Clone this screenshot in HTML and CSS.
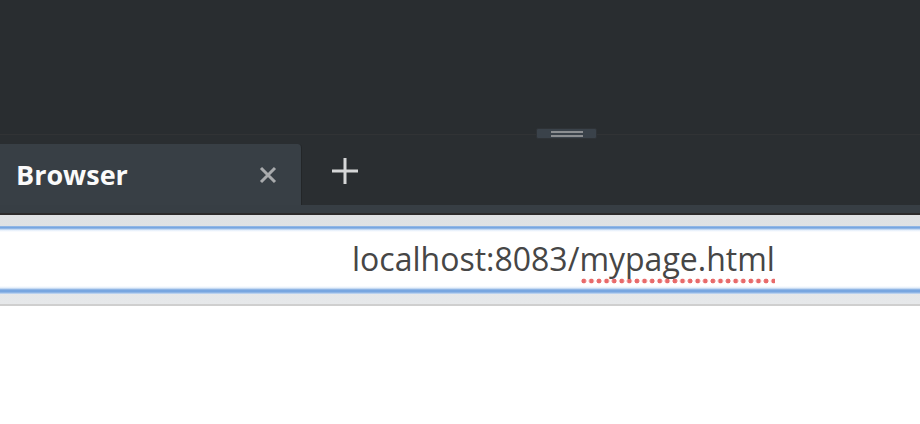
FILE: index.html
```html
<!DOCTYPE html>
<html>
<head>
<meta charset="utf-8">
<link rel="stylesheet" href="styles.css">
</head>
<body>
<div class="top"></div>
<div class="divider">
  <div class="handle"><span class="grip"></span><span class="grip"></span></div>
</div>
<div class="tabbar">
  <div class="tabs">
    <div class="tab">
      <span class="tab-title">Browser</span>
      <svg class="tab-close" width="18" height="18" viewBox="0 0 18 18"><path d="M2 2L16 16M16 2L2 16" stroke="#a9abad" stroke-width="3" fill="none"/></svg>
    </div>
    <div class="newtab">
      <svg width="28" height="28" viewBox="0 0 28 28"><path d="M14 1V27M1 14H27" stroke="#d6d7d8" stroke-width="3" fill="none"/></svg>
    </div>
  </div>
  <div class="tabstrip"></div>
</div>
<div class="urlwrap">
  <div class="url"><span class="url-host">localhost:8083/</span><span class="misspelled">mypage.html</span></div>
</div>
</body>
</html>
```
FILE: styles.css
```css
html, body { margin: 0; padding: 0; background: #fff; }
body { width: 920px; height: 424px; overflow: hidden; font-family: "Open Sans", "Noto Sans", sans-serif; }
.top { height: 134px; background: #292d30; }
.divider { height: 1px; background: #313335; position: relative; }
.handle {
  position: absolute; left: 536px; top: -6px; width: 59px; height: 9px;
  background: #3a424a; border: 1px solid #2e3236; border-radius: 2px;
  display: flex; flex-direction: column; align-items: center; justify-content: center; gap: 2px;
}
.grip { display: block; width: 32px; height: 2px; background: #8b8e91; }
.tabbar { background: #2a2e31; padding-top: 9px; }
.tabs { display: flex; height: 61px; }
.tab {
  width: 285px; padding-left: 16px; background: #383f45;
  border-right: 1px solid #232628; border-top-right-radius: 4px;
  display: flex; align-items: center; justify-content: space-between;
}
.tab-title { color: #fafafa; font-weight: 700; font-size: 27px; line-height: 1; margin-top: -1px; }
.tab-close { margin-right: 24px; }
.newtab { width: 28px; padding-left: 29px; display: flex; align-items: center; margin-top: -8px; }
.newtab svg { display: block; }
.tabstrip { height: 8px; background: #373e44; border-bottom: 2px solid #2d2b2b; }
.urlwrap {
  background: linear-gradient(#dfe1e3, #e6e8ea);
  padding: 11px 0 10px;
  border-bottom: 2px solid #cfcfcf;
}
.url {
  height: 68px; box-sizing: border-box;
  background: linear-gradient(to bottom,
    #a9c6ea 0, #78a6e0 1px, #78a6e0 2px, #a9c6ea 3px, #e2edfa 4px, #fff 6px,
    #fff calc(100% - 8px), #e2edfa calc(100% - 6px), #a9c6ea calc(100% - 5px),
    #78a6e0 calc(100% - 4px), #78a6e0 calc(100% - 2px), #a9c6ea calc(100% - 1px), #c9dbf2 100%);
  padding: 0 0 3px 352px; display: flex; align-items: center;
  font-size: 32px; color: #464646; white-space: nowrap;
}
.url-host, .misspelled { line-height: 1; }
.misspelled {
  padding-bottom: 9px; margin-bottom: -9px;
  background-image: radial-gradient(circle, #e86a6a 2.1px, transparent 2.7px);
  background-size: 7.6px 6px; background-repeat: repeat-x; background-position: 1px 100%;
}
```
